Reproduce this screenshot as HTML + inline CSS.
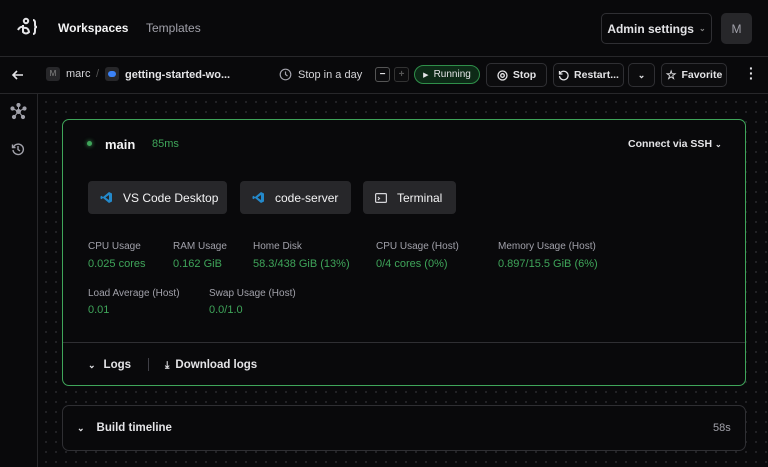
<!DOCTYPE html>
<html><head><style>
*{box-sizing:border-box;margin:0;padding:0}
body{width:768px;height:467px;overflow:hidden;background:#09090b;font-family:"Liberation Sans",sans-serif;color:#e4e4e7;position:relative;font-size:12px}
.abs{position:absolute}
.top{left:0;top:0;width:768px;height:57px;border-bottom:1px solid #27272a}
.bar2{left:0;top:57px;width:768px;height:37px;border-bottom:1px solid #27272a}
.side{left:0;top:94px;width:38px;height:373px;border-right:1px solid #27272a}
.main{left:38px;top:94px;width:730px;height:373px;background-image:radial-gradient(circle,#26262a 0.8px,transparent 1.2px);background-size:10px 10px;background-position:3px 3px}
.btn{position:absolute;border:1px solid #2f2f33;border-radius:5px;background:#0c0c0e;display:flex;align-items:center;justify-content:center;font-size:10.5px;font-weight:bold;color:#e4e4e7;gap:5px}
.card{position:absolute;background:#09090b;border-radius:7px}
.app{position:absolute;top:181px;height:33px;background:#27272a;border-radius:4px;display:flex;align-items:center;padding-left:12px;gap:10px;font-size:12px;color:#f4f4f5}
.lab{position:absolute;font-size:10px;color:#a1a1aa}
.val{position:absolute;font-size:11px;color:#3fa55a}
</style></head><body>
<div class="abs top"></div>
<svg class="abs" style="left:16px;top:17px" width="24" height="20" viewBox="0 0 24 20" fill="none" stroke="#e4e4e7" stroke-width="2"><path d="M2 13 Q4 9 8 10"/><circle cx="10" cy="4" r="2.2"/><path d="M7 8 v7 q3 3 6 0 q-1-5-5-4"/><path d="M17 3 q2 0 2 3 v2 q0 2 2 2 q-2 0-2 2 v2 q0 3-2 3"/></svg>
<div class="abs" style="left:58px;top:21px;font-size:12px;font-weight:bold;color:#f4f4f5">Workspaces</div>
<div class="abs" style="left:146px;top:21px;font-size:12px;color:#a1a1aa">Templates</div>
<div class="btn" style="left:601px;top:13px;width:111px;height:31px;font-size:12px;background:#09090b">Admin settings <span style="color:#888;font-size:8px">⌄</span></div>
<div class="btn" style="left:721px;top:13px;width:31px;height:31px;background:#27272a;border:none;color:#a1a1aa;font-weight:normal;font-size:12px">M</div>
<div class="abs bar2"></div>
<svg class="abs" style="left:11px;top:68px" width="14" height="14" viewBox="0 0 14 14" fill="none" stroke="#e4e4e7" stroke-width="1.6"><path d="M12 7H2M6 3L2 7l4 4"/></svg>
<div class="abs" style="left:46px;top:67px;width:14px;height:14px;background:#27272a;border-radius:3px;font-size:8px;color:#888;text-align:center;line-height:14px">M</div>
<div class="abs" style="left:66px;top:68px;font-size:11px;color:#d4d4d8">marc</div>
<div class="abs" style="left:96px;top:68px;font-size:11px;color:#555">/</div>
<div class="abs" style="left:105px;top:67px;width:14px;height:14px;background:#27272a;border-radius:3px"><div style="margin:4px 3px;width:8px;height:6px;background:#3b82f6;border-radius:3px"></div></div>
<div class="abs" style="left:125px;top:69px;font-size:11px;font-weight:bold;color:#e4e4e7">getting-started-wo...</div>
<svg class="abs" style="left:279px;top:68px" width="13" height="13" viewBox="0 0 13 13" fill="none" stroke="#a1a1aa" stroke-width="1.2"><circle cx="6.5" cy="6.5" r="5.3"/><path d="M6.5 3.5v3l2 1.5"/></svg>
<div class="abs" style="left:298px;top:69px;font-size:11px;color:#d4d4d8">Stop in a day</div>
<div class="btn" style="left:375px;top:67px;width:15px;height:15px;border-radius:3px;border-color:#555;font-size:10px">−</div>
<div class="btn" style="left:394px;top:67px;width:15px;height:15px;border-radius:3px;border-color:#333;color:#555;font-size:10px">+</div>
<div class="btn" style="left:414px;top:65px;width:66px;height:19px;border-radius:10px;border-color:#2f8f4a;background:#0d2a17;font-weight:normal;font-size:10px;color:#e4e4e7"><span style="font-size:7px">▶</span>Running</div>
<div class="btn" style="left:486px;top:63px;width:61px;height:24px"><svg width="11" height="11" viewBox="0 0 11 11" fill="none" stroke="#e4e4e7" stroke-width="1.3"><circle cx="5.5" cy="5.5" r="4.5"/><circle cx="5.5" cy="5.5" r="1.8"/></svg>Stop</div>
<div class="btn" style="left:553px;top:63px;width:71px;height:24px"><svg width="11" height="11" viewBox="0 0 11 11" fill="none" stroke="#e4e4e7" stroke-width="1.3"><path d="M2 3.5A4.3 4.3 0 1 1 1.5 6M1.5 1v3h3"/></svg>Restart...</div>
<div class="btn" style="left:628px;top:63px;width:27px;height:24px;font-size:9px">⌄</div>
<div class="btn" style="left:661px;top:63px;width:66px;height:24px"><span style="font-size:12px">☆</span>Favorite</div>
<div class="abs" style="left:749px;top:66px;font-size:14px;font-weight:bold;line-height:5px;color:#e4e4e7">·<br>·<br>·</div>
<div class="abs side"></div>
<svg class="abs" style="left:10px;top:103px" width="17" height="17" viewBox="0 0 17 17" fill="#a1a1aa" stroke="#a1a1aa" stroke-width="1"><circle cx="8.5" cy="8.5" r="2"/><circle cx="8.5" cy="2" r="1.6"/><circle cx="2.5" cy="5.5" r="1.6"/><circle cx="14.5" cy="5.5" r="1.6"/><circle cx="4" cy="14" r="1.6"/><circle cx="13" cy="14" r="1.6"/><path d="M8.5 8.5V2M8.5 8.5L2.5 5.5M8.5 8.5l6-3M8.5 8.5L4 14M8.5 8.5l4.5 5.5"/></svg>
<svg class="abs" style="left:11px;top:142px" width="14" height="14" viewBox="0 0 14 14" fill="none" stroke="#a1a1aa" stroke-width="1.4"><path d="M2.5 5A5.2 5.2 0 1 1 2 8M1.5 2.5v3h3M7 4v3.5l2 1.5"/></svg>
<div class="abs main"></div>
<div class="card" style="left:62px;top:119px;width:684px;height:267px;border:1.5px solid #3fa55a"></div>
<div class="abs" style="left:87px;top:141px;width:5px;height:5px;border-radius:50%;background:#3fa55a;box-shadow:0 0 4px #3fa55a"></div>
<div class="abs" style="left:105px;top:137px;font-size:13px;font-weight:bold;color:#f4f4f5">main</div>
<div class="abs" style="left:152px;top:138px;font-size:11px;color:#3fa55a">85ms</div>
<div class="abs" style="left:628px;top:138px;font-size:10.5px;font-weight:bold;color:#e4e4e7">Connect via SSH <span style="font-size:8px">⌄</span></div>
<div class="app" style="left:88px;width:139px"><svg width="13" height="13" viewBox="0 0 13 13"><path d="M9 1l3 1.5v8L9 12 3 7 1.5 8.2 0.5 7.5v-2L1.5 4.8 3 6l6-5z" fill="#2489ca"/><path d="M9 4L5.5 6.5 9 9z" fill="#27272a"/></svg>VS Code Desktop</div>
<div class="app" style="left:240px;width:111px"><svg width="13" height="13" viewBox="0 0 13 13"><path d="M9 1l3 1.5v8L9 12 3 7 1.5 8.2 0.5 7.5v-2L1.5 4.8 3 6l6-5z" fill="#2489ca"/><path d="M9 4L5.5 6.5 9 9z" fill="#27272a"/></svg>code-server</div>
<div class="app" style="left:363px;width:93px"><svg width="12" height="10" viewBox="0 0 12 10" fill="none" stroke="#d4d4d8" stroke-width="1.2"><rect x="0.6" y="0.6" width="10.8" height="8.8" rx="1"/><path d="M3 4l1.5 1.5L3 7"/></svg>Terminal</div>
<div class="lab" style="left:88px;top:241px">CPU Usage</div><div class="val" style="left:88px;top:258px">0.025 cores</div>
<div class="lab" style="left:173px;top:241px">RAM Usage</div><div class="val" style="left:173px;top:258px">0.162 GiB</div>
<div class="lab" style="left:253px;top:241px">Home Disk</div><div class="val" style="left:253px;top:258px">58.3/438 GiB (13%)</div>
<div class="lab" style="left:376px;top:241px">CPU Usage (Host)</div><div class="val" style="left:376px;top:258px">0/4 cores (0%)</div>
<div class="lab" style="left:498px;top:241px">Memory Usage (Host)</div><div class="val" style="left:498px;top:258px">0.897/15.5 GiB (6%)</div>
<div class="lab" style="left:88px;top:288px">Load Average (Host)</div><div class="val" style="left:88px;top:304px">0.01</div>
<div class="lab" style="left:209px;top:288px">Swap Usage (Host)</div><div class="val" style="left:209px;top:304px">0.0/1.0</div>
<div class="abs" style="left:63px;top:342px;width:682px;height:1px;background:#2f2f33"></div>
<div class="abs" style="left:88px;top:359px;font-size:11.5px;font-weight:bold;color:#e4e4e7"><span style="font-size:9px;margin-right:8px">⌄</span>Logs</div>
<div class="abs" style="left:148px;top:358px;width:1px;height:13px;background:#3f3f46"></div>
<div class="abs" style="left:165px;top:359px;font-size:11.5px;font-weight:bold;color:#e4e4e7"><span style="font-size:10px;margin-right:6px">⤓</span>Download logs</div>
<div class="card" style="left:62px;top:405px;width:684px;height:46px;border:1px solid #2f2f33"></div>
<div class="abs" style="left:77px;top:422px;font-size:11.5px;font-weight:bold;color:#e4e4e7"><span style="font-size:9px;margin-right:12px">⌄</span>Build timeline</div>
<div class="abs" style="left:713px;top:422px;font-size:11px;color:#a1a1aa">58s</div>
</body></html>
